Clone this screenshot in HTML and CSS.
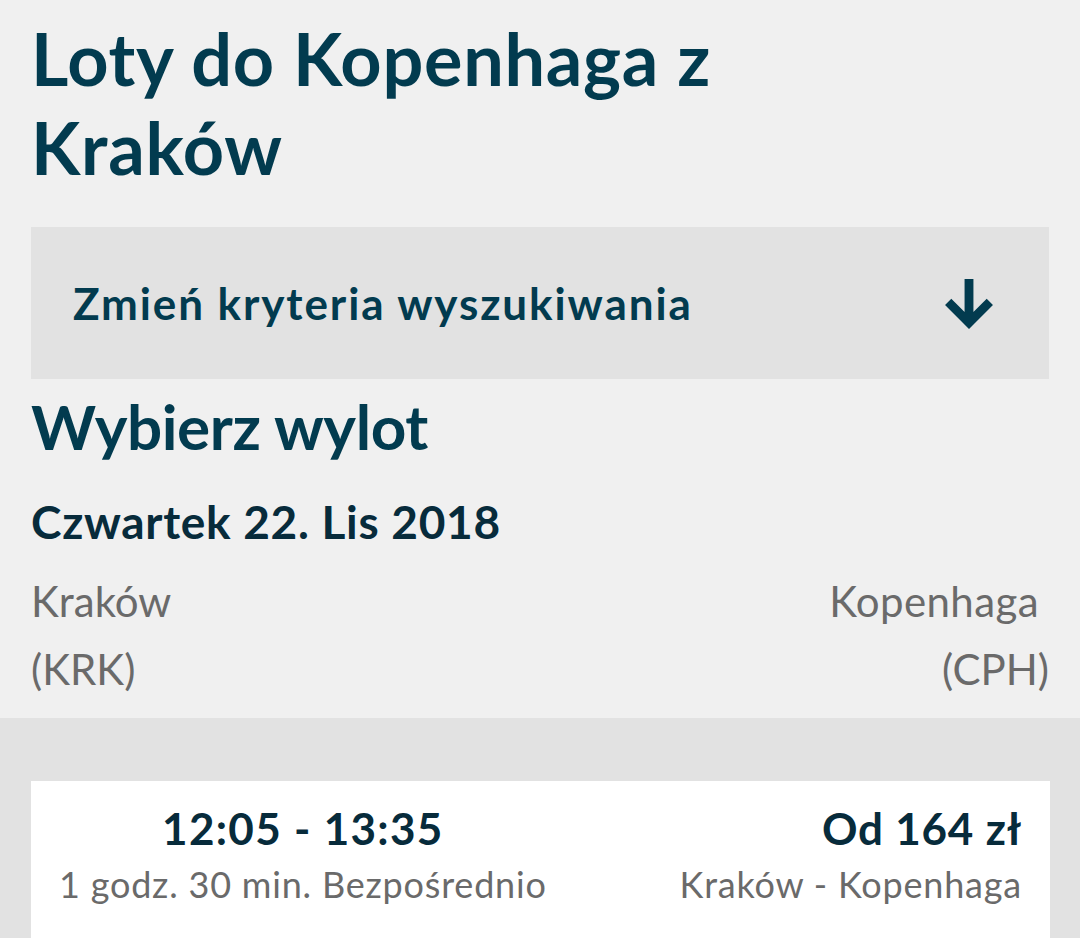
FILE: index.html
```html
<!DOCTYPE html>
<html lang="pl">
<head>
    <meta charset="UTF-8">
    <meta name="viewport" content="width=device-width, initial-scale=1.0">
    <title>Loty do Kopenhaga z Kraków</title>
    <link rel="stylesheet" href="styles.css">
</head>
<body>
    <div class="container">
        <h1>Loty do Kopenhaga z Kraków</h1>

        <div class="search-toggle">
            <span>Zmień kryteria wyszukiwania</span>
            <svg class="arrow" width="50" height="50" viewBox="0 0 48 48">
                <path d="M24 0 V42 M4 22 L24 42 L44 22" fill="none" stroke="currentColor" stroke-width="8.5"/>
            </svg>
        </div>

        <h2>Wybierz wylot</h2>
        <h3 class="flight-date">Czwartek 22. Lis 2018</h3>

        <div class="route">
            <div class="route-from">
                <div class="city">Kraków</div>
                <div class="code">(KRK)</div>
            </div>
            <div class="route-to">
                <div class="city">Kopenhaga</div>
                <div class="code">(CPH)</div>
            </div>
        </div>
    </div>

    <div class="flights">
        <div class="flight-card">
            <div class="flight-times">
                <div class="big time">12:05 - 13:35</div>
                <div class="small">1 godz. 30 min. Bezpośrednio</div>
            </div>
            <div class="flight-price">
                <div class="big">Od 164 zł</div>
                <div class="small">Kraków - Kopenhaga</div>
            </div>
        </div>
    </div>
</body>
</html>
```

FILE: styles.css
```css
:root {
    --primary-color: #023b4f;
    --dark-color: #072b3b;
    --muted-color: #6a6a6a;
    --background-color: #f0f0f0;
    --panel-color: #e2e2e2;
}

* {
    box-sizing: border-box;
    margin: 0;
    padding: 0;
}

body {
    font-family: Lato, 'Open Sans', sans-serif;
    background-color: var(--background-color);
    overflow: hidden;
}

.container {
    padding: 14px 31px 15px 31px;
}

h1 {
    color: var(--primary-color);
    font-size: 72px;
    line-height: 89px;
    font-weight: 700;
    letter-spacing: 0.7px;
    width: 720px;
    margin-bottom: 35px;
}

.search-toggle {
    height: 152px;
    background-color: var(--panel-color);
    display: flex;
    align-items: center;
    justify-content: space-between;
    padding: 0 55px 0 42px;
    color: var(--primary-color);
    font-size: 44px;
    font-weight: 700;
    letter-spacing: 1.9px;
}

.arrow {
    display: block;
    margin-top: 2px;
}

h2 {
    color: var(--primary-color);
    font-size: 62px;
    line-height: 74px;
    font-weight: 700;
    letter-spacing: -0.4px;
    margin-top: 10px;
}

.flight-date {
    color: var(--dark-color);
    font-size: 46px;
    line-height: 56px;
    font-weight: 700;
    letter-spacing: 0.7px;
    margin-top: 31px;
}

.route {
    display: flex;
    justify-content: space-between;
    margin-top: 17px;
    color: var(--muted-color);
    font-size: 42px;
    line-height: 68px;
}

.route-to {
    text-align: right;
}

.route-to .city {
    margin-right: 10px;
    letter-spacing: 0.4px;
}

.flights {
    background-color: var(--panel-color);
    padding: 63px 30px 0 31px;
    min-height: 300px;
}

.flight-card {
    background: white;
    display: flex;
    justify-content: space-between;
    padding: 19px 28px 40px 28px;
}

.flight-times {
    text-align: center;
}

.flight-price {
    text-align: right;
}

.big {
    color: var(--dark-color);
    font-size: 44px;
    line-height: 56px;
    font-weight: 700;
    letter-spacing: 0.8px;
}

.big.time {
    letter-spacing: 1.3px;
}

.small {
    color: var(--muted-color);
    font-size: 36px;
    line-height: 56px;
    letter-spacing: 0.8px;
}
```
